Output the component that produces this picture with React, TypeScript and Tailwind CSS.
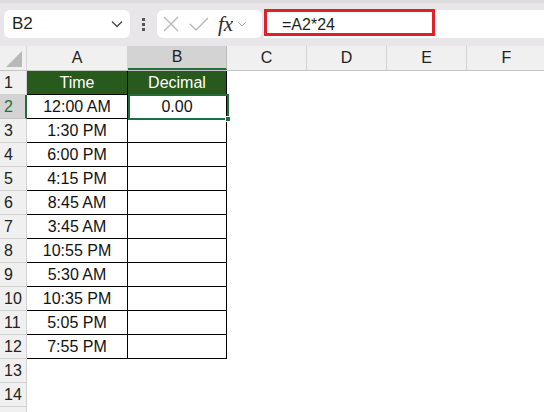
import React from 'react';

const times = [
  '12:00 AM',
  '1:30 PM',
  '6:00 PM',
  '4:15 PM',
  '8:45 AM',
  '3:45 AM',
  '10:55 PM',
  '5:30 AM',
  '10:35 PM',
  '5:05 PM',
  '7:55 PM',
];

const cols = [
  { key: 'A', w: 'w-[101px]' },
  { key: 'B', w: 'w-[99px]' },
  { key: 'C', w: 'w-[80px]' },
  { key: 'D', w: 'w-[80px]' },
  { key: 'E', w: 'w-[80px]' },
  { key: 'F', w: 'w-[80px]' },
];

const Chevron = ({ className }: { className?: string }) => (
  <svg viewBox="0 0 12 8" className={className} fill="none" stroke="currentColor" strokeWidth="1.3">
    <path d="M1 1.5 L6 6.5 L11 1.5" />
  </svg>
);

const Toolbar = () => (
  <div className="h-[46px] bg-[#e9e6e9] border-t-[3px] border-[#dedbdf] flex items-start pt-[7px]">
    <div className="ml-[4px] w-[126px] h-[28px] bg-white rounded-[6px] flex items-center justify-between pl-[8px] pr-[7px]">
      <span className="text-[17px] text-[#1f1f1f]">B2</span>
      <Chevron className="w-[12px] h-[8px] text-[#444]" />
    </div>
    <div className="w-[27px] h-[28px] flex flex-col items-center justify-center gap-[2px]">
      <div className="w-[3px] h-[3px] bg-[#555]" />
      <div className="w-[3px] h-[3px] bg-[#555]" />
      <div className="w-[3px] h-[3px] bg-[#555]" />
    </div>
    <div className="w-[105px] h-[28px] bg-white rounded-[6px] flex items-center pl-[6px]">
      <svg viewBox="0 0 16 16" className="w-[16px] h-[16px]" fill="none" stroke="#b5b5b5" strokeWidth="1.3">
        <path d="M1 1 L15 15 M15 1 L1 15" />
      </svg>
      <svg viewBox="0 0 20 14" className="ml-[10px] w-[20px] h-[14px]" fill="none" stroke="#b5b5b5" strokeWidth="1.3">
        <path d="M1 7 L7 13 L19 1" />
      </svg>
      <span className="ml-[9px] text-[21px] italic text-[#2a2a2a] font-['Liberation_Serif',serif] leading-none">fx</span>
      <Chevron className="ml-[4px] w-[10px] h-[6px] text-[#999]" />
    </div>
    <div className="ml-[2px] flex-1 h-[28px] bg-white relative">
      <div className="absolute left-0 top-[-1px] w-[171px] h-[27px] border-[3px] border-[#e51f2a]" />
      <span className="absolute left-[18px] top-[3px] text-[16px] text-[#1f1f1f]">=A2*24</span>
    </div>
  </div>
);

export default function App() {
  const rows = Array.from({ length: 15 }, (_, i) => i + 1);
  return (
    <div className="w-[544px] h-[412px] overflow-hidden bg-white font-['Liberation_Sans',Arial,sans-serif] relative">
      <Toolbar />
      <div className="flex h-[25px] bg-[#f0f0f0] border-b border-[#c5c5c5]">
        <div className="w-[27px] shrink-0 border-r border-[#d8d8d8] relative">
          <div className="absolute right-[4px] bottom-[3px] w-0 h-0 border-l-[16px] border-l-transparent border-b-[16px] border-b-[#b9b9b9]" />
        </div>
        {cols.map((c) => (
          <div
            key={c.key}
            className={`${c.w} shrink-0 flex items-center justify-center text-[16px] text-[#222] border-r ${
              c.key === 'B'
                ? 'bg-[#d3d3d3] border-b-2 border-b-[#1e6e3e] border-r-[#bbb]'
                : 'border-[#d2d2d2]'
            }`}
          >
            {c.key}
          </div>
        ))}
      </div>
      {rows.map((r) => (
        <div key={r} className="flex h-[24px]">
          <div
            className={`w-[27px] shrink-0 flex items-center pl-[4px] text-[16px] border-b ${
              r === 2
                ? 'bg-[#d3d3d3] text-[#1e6e3e] border-r-2 border-r-[#1e6e3e] border-b-[#c5c5c5]'
                : 'bg-[#f0f0f0] text-[#222] border-r border-[#d2d2d2]'
            }`}
          >
            {r <= 14 ? r : ''}
          </div>
          {r <= 12 ? (
            <>
              <div
                className={`w-[101px] shrink-0 flex items-center justify-center text-[16px] border-r border-b border-black ${
                  r === 1 ? 'bg-[#275a1c] text-white' : 'text-[#111]'
                }`}
              >
                {r === 1 ? 'Time' : times[r - 2]}
              </div>
              <div
                className={`w-[99px] shrink-0 flex items-center justify-center text-[16px] border-r border-b border-black ${
                  r === 1 ? 'bg-[#275a1c] text-white' : 'text-[#111]'
                }`}
              >
                {r === 1 ? 'Decimal' : r === 2 ? '0.00' : ''}
              </div>
            </>
          ) : null}
        </div>
      ))}
      <div className="absolute left-[128px] top-[94px] w-[101px] h-[26px] border-2 border-[#1e6e3e] pointer-events-none">
        <div className="absolute right-[-4px] bottom-[-4px] w-[6px] h-[6px] bg-[#1e6e3e] border border-white" />
      </div>
    </div>
  );
}
